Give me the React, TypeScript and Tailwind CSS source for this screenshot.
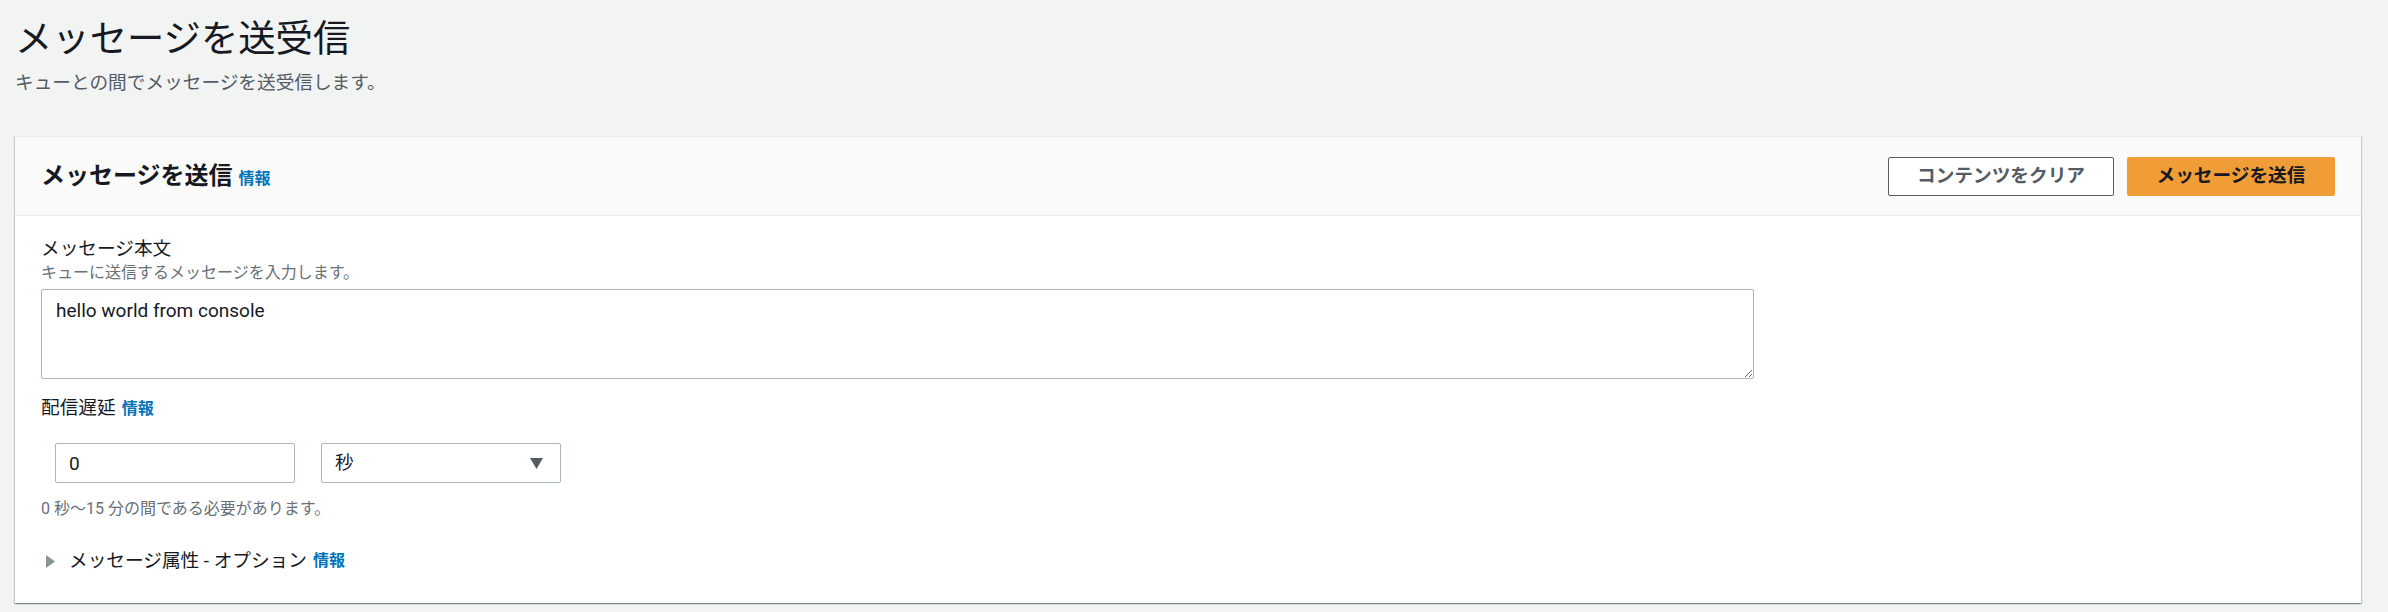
import React from 'react';

const Info: React.FC = () => (
  <span className="ml-[6px] text-[16px] font-bold text-[#0073bb]">情報</span>
);

export default function App() {
  return (
    <div className="min-h-screen w-full bg-[#f2f3f3] pl-[15px] pr-[27px] pt-[17px] font-[Roboto,'Noto_Sans_CJK_JP',sans-serif] text-[#16191f]">
      {/* Page heading */}
      <h1 className="text-[37.33px] leading-[44px] font-normal">メッセージを送受信</h1>
      <p className="mt-[10px] text-[18.67px] leading-[24px] text-[#545b64]">キューとの間でメッセージを送受信します。</p>

      {/* Send panel */}
      <div className="mt-[41px] bg-white border-t border-[#eaeded] shadow-[0_1px_1px_0_rgba(0,28,36,0.3),1px_1px_1px_0_rgba(0,28,36,0.15),-1px_1px_1px_0_rgba(0,28,36,0.15)]">
        <div className="flex h-[79px] items-center justify-between border-b border-[#eaeded] bg-[#fafafa] pl-[26px] pr-[26px]">
          <div className="flex items-baseline">
            <h2 className="text-[24px] font-bold leading-[30px]">メッセージを送信</h2>
            <Info />
          </div>
          <div className="flex gap-[13px]">
            <button className="h-[39px] w-[226px] rounded-[2px] border border-[#545b64] bg-white text-[18.67px] font-bold text-[#545b64]">
              コンテンツをクリア
            </button>
            <button className="h-[39px] w-[208px] rounded-[2px] bg-[#f09d38] text-[18.67px] font-bold text-[#16191f]">
              メッセージを送信
            </button>
          </div>
        </div>

        <div className="pl-[26px] pr-[26px] pt-[22px] pb-[30px]">
          <div className="text-[18.67px] leading-[22px]">メッセージ本文</div>
          <div className="mt-[3px] text-[16px] leading-[20px] text-[#687078]">キューに送信するメッセージを入力します。</div>
          <textarea
            readOnly
            defaultValue="hello world from console"
            className="mt-[6px] block h-[90px] w-[1713px] resize-y rounded-[2px] border border-[#aab7b8] bg-white px-[14px] pt-[9px] text-[19px] leading-[24px] text-[#16191f] outline-none"
          />

          <div className="mt-[18px] flex items-baseline">
            <span className="text-[18.67px] leading-[22px]">配信遅延</span>
            <Info />
          </div>

          <div className="mt-[22px] flex gap-[26px] pl-[14px]">
            <input
              readOnly
              defaultValue="0"
              className="h-[40px] w-[240px] rounded-[2px] border border-[#aab7b8] bg-white px-[13px] text-[19px] text-[#16191f] outline-none"
            />
            <div className="flex h-[40px] w-[240px] items-center justify-between rounded-[2px] border border-[#aab7b8] bg-white pl-[13px] pr-[17px]">
              <span className="text-[18.67px]">秒</span>
              <svg width="13" height="11" viewBox="0 0 13 11">
                <path d="M0 0 H13 L6.5 11 Z" fill="#545b64" />
              </svg>
            </div>
          </div>

          <div className="mt-[16px] text-[16px] leading-[20px] text-[#687078]">0 秒〜15 分の間である必要があります。</div>

          <div className="mt-[30px] flex items-center">
            <svg width="9" height="13" viewBox="0 0 9 13" className="ml-[5px]">
              <path d="M0 0 L9 6.5 L0 13 Z" fill="#879596" />
            </svg>
            <span className="ml-[14px] text-[18.67px] leading-[24px]">メッセージ属性 - オプション</span>
            <Info />
          </div>
        </div>
      </div>
    </div>
  );
}
